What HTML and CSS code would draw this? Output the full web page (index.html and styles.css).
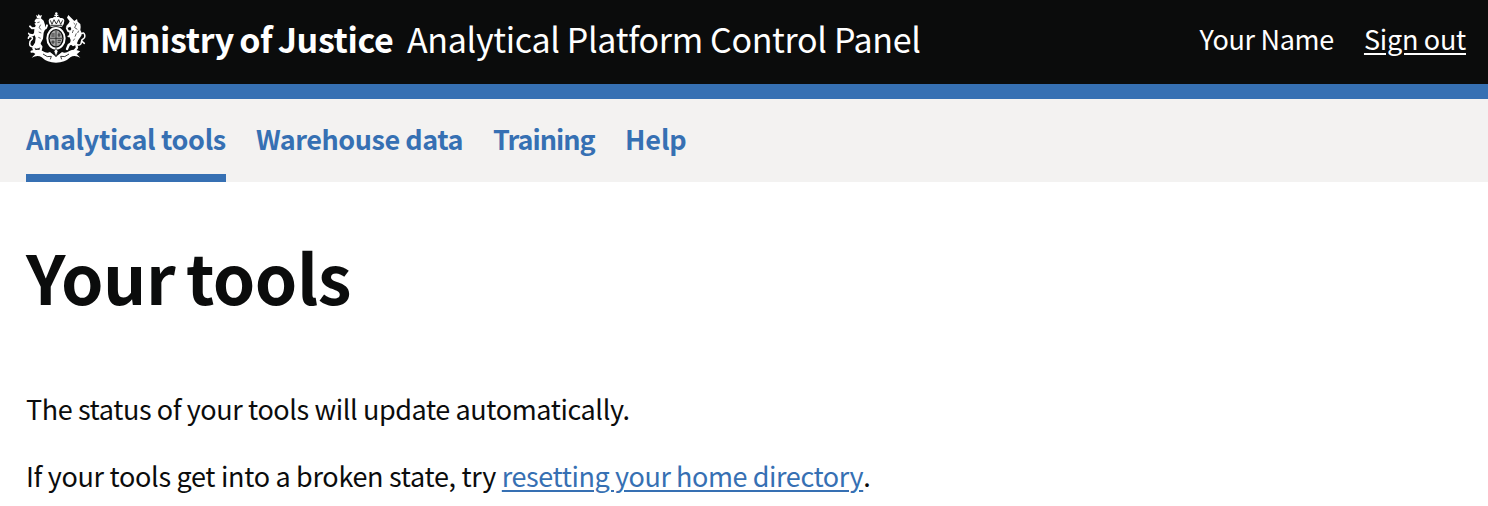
FILE: index.html
```html
<!DOCTYPE html>
<html lang="en">
<head>
<meta charset="utf-8">
<title>Your tools - Analytical Platform Control Panel</title>
<link rel="stylesheet" href="styles.css">
</head>
<body>
<header class="header">
  <div class="brand">
    <svg class="crest" viewBox="18 18 180 156" aria-hidden="true">
      <!-- crown -->
      <g fill="#fff">
        <circle cx="109" cy="22" r="3.5"/>
        <path d="M107 24h4v12h-4zM103 26h12v4h-12z"/>
        <path d="M86 43q2-9 12-7q8-7 11 0q4-7 12 0q11-2 12 8q0 8-7 18H92q-7-10-6-19z"/>
      </g>
      <path d="M91 43l5 12 6-14 7 13 7-13 6 14 6-12M91 58h36" fill="none" stroke="#0b0c0c" stroke-width="2.5"/>
      <!-- lion -->
      <g fill="#fff">
        <path d="M48 26l5 4 3-6 4 5 6-2-3 9H51z"/>
        <path d="M48 38l14-2 9 8 4 12 1 12-5 12-2 18-7 14-3 14-11 2-9-8 6-10 2-14-5-14 1-12 4-12-4-5 5-3-5-4z"/>
      </g>
      <g fill="none" stroke="#fff" stroke-linecap="round" stroke-linejoin="round">
        <path d="M48 66l-12 1-6-6M50 80l-12 8-7-2" stroke-width="6"/>
        <path d="M70 70l8-4 3-8" stroke-width="6"/>
        <path d="M56 112l8 10-3 14h-9M46 116l-6 10 4 9-9 2" stroke-width="7"/>
        <path d="M38 122q-9 0-9-9t7-13q4-6-3-8t-8 5M26 82l5 8" stroke-width="4.5"/>
      </g>
      <path d="M52 50l7-2M62 56l-5 9 7 6M56 78l8 3M55 94l7 3" fill="none" stroke="#0b0c0c" stroke-width="2"/>
      <!-- unicorn -->
      <g fill="#fff">
        <path d="M145 27l18 18 8-6 2 8 8 7 1 9-1 9 4 8-3 12-7 10-6 14-10 5-9-7 2-12-5-12 1-12 6-9-3-7-9 4-4-5 8-9 3-6-8-11z"/>
      </g>
      <g fill="none" stroke="#fff" stroke-linecap="round" stroke-linejoin="round">
        <path d="M154 78l-10-3-4-9M156 88l-11 3" stroke-width="5.5"/>
        <path d="M156 110l-10 7-5 12M168 112l3 13-8 10M163 136l9 3" stroke-width="7"/>
        <path d="M172 116q12 3 12-8q0-8 6-10t4-12q-3-8-9-3M186 106l7 6M182 88l-5-4" stroke-width="4.5"/>
      </g>
      <path d="M161 51l4 4M170 52l-6 13 8 5M160 72l-3 9M169 82l-4 10M164 98l-4 6M176 74l-3 7" fill="none" stroke="#0b0c0c" stroke-width="2"/>
      <!-- shield and garter -->
      <ellipse cx="108" cy="97" rx="31" ry="36" fill="#0b0c0c"/>
      <ellipse cx="108" cy="97" rx="26" ry="31" fill="none" stroke="#fff" stroke-width="6"/>
      <ellipse cx="108" cy="97" rx="19" ry="24" fill="#a6a6a6"/>
      <path d="M108 74v46M90 97h36" stroke="#0b0c0c" stroke-width="2"/>
      <path d="M94 84h10M94 90h10M113 103h10M113 109h8M117 80v13M113 87h9M99 103v11M94 108h10" stroke="#333" stroke-width="3"/>
      <!-- motto scroll -->
      <path d="M35 136q18-9 33-1q12 8 22 3l18 14 18-14q10 5 22-3q15-8 33 1l-11 8 11 11q-18-9-30-1q-16 16-43 16t-43-16q-12-8-30 1l11-11z" fill="#fff"/>
      <path d="M69 144q13 12 25 7l-3 9M147 144q-13 12-25 7l3 9" fill="none" stroke="#0b0c0c" stroke-width="2.5"/>
      <path d="M108 127l6 9-6 16-6-16z" fill="#fff" stroke="#0b0c0c" stroke-width="2"/>
    </svg>
    <span class="org">Ministry of Justice</span>
    <span class="product">Analytical Platform Control Panel</span>
  </div>
  <div class="account">
    <span class="user">Your Name</span>
    <a class="signout" href="#">Sign out</a>
  </div>
</header>
<nav class="nav">
  <a class="nav-item analytical active" href="#">Analytical tools</a>
  <a class="nav-item warehouse" href="#">Warehouse data</a>
  <a class="nav-item training" href="#">Training</a>
  <a class="nav-item help" href="#">Help</a>
</nav>
<main class="main">
  <h1 class="title">Your tools</h1>
  <p class="text status">The status of your tools will update automatically.</p>
  <p class="text reset">If your tools get into a broken state, try <a class="link" href="#">resetting your home directory</a>.</p>
</main>
</body>
</html>
```
FILE: styles.css
```css
* { box-sizing: border-box; }
body {
  margin: 0;
  background: #fff;
  color: #0b0c0c;
  font-family: "Noto Sans CJK SC", "Noto Sans", sans-serif;
  font-size: 27px;
}
.header {
  display: flex;
  justify-content: space-between;
  height: 99px;
  padding: 12px 22px 0 26px;
  background: #0b0c0c;
  border-bottom: 15px solid #3670b3;
  color: #fff;
  white-space: nowrap;
}
.brand, .account { display: flex; height: 52px; line-height: 53px; }
.crest { width: 60px; height: 52px; margin-right: 14px; }
.org {
  width: 307px;
  font-size: 34px;
  font-weight: 700;
  letter-spacing: -0.35px;
  word-spacing: -2px;
}
.product { font-size: 34px; letter-spacing: -0.33px; }
.account { gap: 30px; }
.user { letter-spacing: -0.3px; }
.signout {
  color: #fff;
  letter-spacing: -0.27px;
  text-decoration-thickness: 2px;
  text-underline-offset: 3px;
}
.nav {
  display: flex;
  gap: 30px;
  height: 83px;
  padding: 0 26px;
  background: #f3f2f1;
}
.nav-item {
  height: 83px;
  line-height: 80px;
  color: #3670b3;
  font-weight: 700;
  text-decoration: none;
  white-space: nowrap;
}
.active { border-bottom: 8px solid #3670b3; }
.analytical { width: 200px; letter-spacing: -0.33px; }
.warehouse { width: 207px; letter-spacing: -0.46px; }
.training { width: 102px; letter-spacing: -1px; }
.help { letter-spacing: -0.1px; }
.main { padding: 54px 26px 0; }
.title {
  margin: 0 0 73px;
  font-size: 68px;
  font-weight: 700;
  line-height: 80px;
  letter-spacing: -0.5px;
  word-spacing: -4px;
}
.text { margin: 0 0 27px; line-height: 40px; }
.status { letter-spacing: -0.4px; }
.reset { letter-spacing: -0.31px; }
.link {
  color: #3670b3;
  letter-spacing: -0.42px;
  text-decoration-thickness: 2px;
  text-underline-offset: 3px;
}
```
